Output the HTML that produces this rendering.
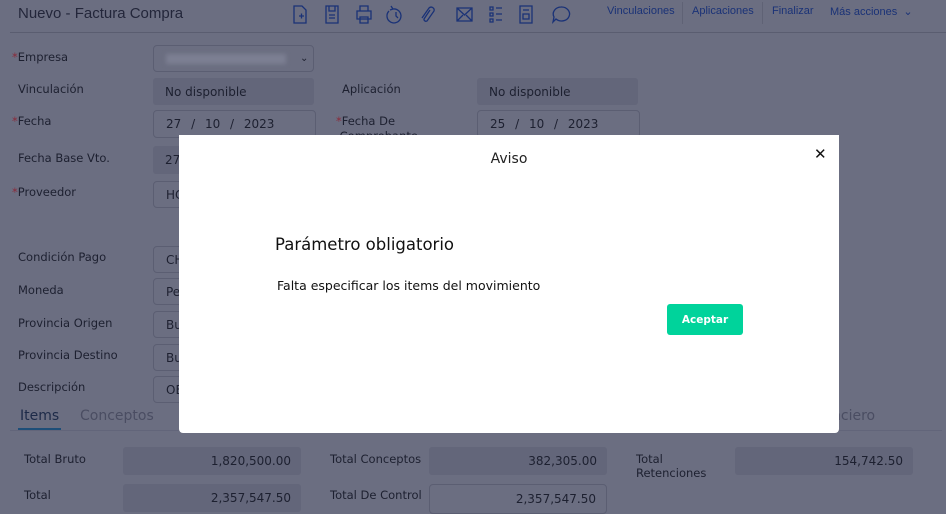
<!DOCTYPE html>
<html><head><meta charset="utf-8">
<style>
*{margin:0;padding:0;box-sizing:border-box}
body{width:946px;height:508px;overflow:hidden;background:#6b6e81;font-family:"DejaVu Sans","Liberation Sans",sans-serif;color:#1d2030;position:relative}
.a{position:absolute;white-space:nowrap}
.lbl{font-size:11.5px;color:#1d2030}
.req{color:#8a2a3a}
.f{position:absolute;background:#63667a;border-radius:3px;font-size:12px;color:#1d2030;padding-left:12px;display:flex;align-items:center}
.fb{position:absolute;border:1px solid #5b5e72;border-radius:4px;font-size:12px;color:#1d2030;padding-left:12px;display:flex;align-items:center;background:#6b6e81}
.lnk{font-family:"Liberation Sans",sans-serif;font-size:11px;color:#1a3277}
.ic{position:absolute;top:3px}
</style></head><body>
<div class="a" style="left:18px;top:5px;font-size:15px;font-family:'Liberation Sans',sans-serif;color:#23263a">Nuevo - Factura Compra</div>
<div class="a" style="left:10px;top:32px;width:936px;height:1px;background:#5a5d70"></div>
<svg class="ic" style="left:290px" width="300" height="24" viewBox="0 0 300 24" fill="none" stroke="#1a3277" stroke-width="1.3">
<path d="M4 3h8l4 4v13H4z M9 13h5 M11.5 10.5v5"/>
<path d="M36 3h12v17H36z M39 3v5h6V3 M39 12h6 M39 15h6"/>
<path d="M67 8h14v8H67z M70 8V3h8v5 M70 14h8v6h-8z"/>
<path d="M103 6a7 7 0 1 1-4 2 M101 3l2 3-3 1 M106 9v4l2 2"/>
<path d="M140 7l-6 9a2 2 0 0 0 3 2l7-10a3 3 0 0 0-5-3l-7 10"/>
<path d="M167 5h15v13h-15z M167 5l7.5 7L182 5 M167 18l6-6 M182 18l-6-6"/>
<path d="M200 4h3v3h-3z M200 10h3v3h-3z M200 16h3v3h-3z M206 5h6 M206 11h6 M206 17h6"/>
<path d="M230 3h12v17h-12z M233 7h6 M233 11h6v5h-6z"/>
<path d="M271 4a8 7 0 1 1-5 12l-3 3 1-5a8 7 0 0 1 7-10z"/>
</svg>
<div class="a lnk" style="left:607px;top:5px">Vinculaciones</div>
<div class="a" style="left:682px;top:2px;width:1px;height:22px;background:#5f6275"></div>
<div class="a lnk" style="left:692px;top:5px">Aplicaciones</div>
<div class="a" style="left:762px;top:2px;width:1px;height:22px;background:#5f6275"></div>
<div class="a lnk" style="left:772px;top:5px">Finalizar</div>
<div class="a lnk" style="left:830px;top:5px">Más acciones&nbsp; ⌄</div>

<div class="a lbl" style="left:12px;top:50px"><span class="req">*</span>Empresa</div>
<div class="fb" style="left:153px;top:45px;width:161px;height:27px"><span style="display:inline-block;width:120px;height:10px;background:#7c7f92;filter:blur(2px)"></span><span style="margin-left:14px;font-size:10px">⌄</span></div>
<div class="a lbl" style="left:18px;top:82px">Vinculación</div>
<div class="f" style="left:153px;top:78px;width:161px;height:27px">No disponible</div>
<div class="a lbl" style="left:342px;top:82px">Aplicación</div>
<div class="f" style="left:477px;top:78px;width:161px;height:27px">No disponible</div>
<div class="a lbl" style="left:12px;top:114px"><span class="req">*</span>Fecha</div>
<div class="fb" style="left:153px;top:110px;width:163px;height:28px;word-spacing:6px">27 / 10 / 2023</div>
<div class="a lbl" style="left:336px;top:114px;line-height:15px"><span class="req">*</span>Fecha De<br>&nbsp;Comprobante</div>
<div class="fb" style="left:477px;top:110px;width:163px;height:28px;word-spacing:6px">25 / 10 / 2023</div>
<div class="a lbl" style="left:18px;top:151px">Fecha Base Vto.</div>
<div class="f" style="left:153px;top:146px;width:40px;height:28px">27</div>
<div class="a lbl" style="left:12px;top:185px"><span class="req">*</span>Proveedor</div>
<div class="fb" style="left:153px;top:181px;width:40px;height:27px">HC</div>
<div class="a lbl" style="left:18px;top:250px">Condición Pago</div>
<div class="fb" style="left:153px;top:246px;width:40px;height:27px">CH</div>
<div class="a lbl" style="left:18px;top:283px">Moneda</div>
<div class="fb" style="left:153px;top:278px;width:40px;height:27px">Pe</div>
<div class="a lbl" style="left:18px;top:316px">Provincia Origen</div>
<div class="fb" style="left:153px;top:311px;width:40px;height:27px">Bu</div>
<div class="a lbl" style="left:18px;top:348px">Provincia Destino</div>
<div class="fb" style="left:153px;top:344px;width:40px;height:27px">Bu</div>
<div class="a lbl" style="left:18px;top:380px">Descripción</div>
<div class="fb" style="left:153px;top:376px;width:40px;height:27px">OE</div>

<div class="a" style="left:20px;top:408px;font-size:14px;color:#1d2a48">Items</div>
<div class="a" style="left:18px;top:428px;width:43px;height:3px;background:#1e4e78"></div>
<div class="a" style="left:80px;top:408px;font-size:14px;color:#4a4d62">Conceptos</div>
<div class="a" style="left:832px;top:408px;font-size:14px;color:#4a4d62">nciero</div>
<div class="a" style="left:10px;top:430px;width:932px;height:1px;background:#62657a"></div>

<div class="a lbl" style="left:24px;top:452px">Total Bruto</div>
<div class="f" style="left:123px;top:447px;width:178px;height:28px;justify-content:flex-end;padding-right:10px">1,820,500.00</div>
<div class="a lbl" style="left:330px;top:452px">Total Conceptos</div>
<div class="f" style="left:429px;top:447px;width:178px;height:28px;justify-content:flex-end;padding-right:10px">382,305.00</div>
<div class="a lbl" style="left:636px;top:452px;line-height:14px">Total<br>Retenciones</div>
<div class="f" style="left:735px;top:447px;width:178px;height:28px;justify-content:flex-end;padding-right:10px">154,742.50</div>
<div class="a lbl" style="left:24px;top:488px">Total</div>
<div class="f" style="left:123px;top:484px;width:178px;height:28px;justify-content:flex-end;padding-right:10px">2,357,547.50</div>
<div class="a lbl" style="left:330px;top:488px">Total De Control</div>
<div class="fb" style="left:429px;top:484px;width:178px;height:30px;justify-content:flex-end;padding-right:10px">2,357,547.50</div>

<div class="a" style="left:179px;top:135px;width:660px;height:298px;background:#fff;border-radius:0 0 4px 4px;font-family:'DejaVu Sans',sans-serif">
 <div class="a" style="left:0;top:16px;width:660px;text-align:center;font-size:14px;color:#222">Aviso</div>
 <div class="a" style="left:635px;top:10px;font-size:15px;font-weight:bold;color:#111">✕</div>
 <div class="a" style="left:96px;top:100px;font-size:16.5px;color:#111">Parámetro obligatorio</div>
 <div class="a" style="left:98px;top:143px;font-size:12.5px;color:#111">Falta especificar los items del movimiento</div>
 <div class="a" style="left:488px;top:169px;width:76px;height:31px;background:#00d39b;border-radius:3px;color:#fff;font-size:10.5px;font-weight:bold;display:flex;align-items:center;justify-content:center">Aceptar</div>
</div>
</body></html>
